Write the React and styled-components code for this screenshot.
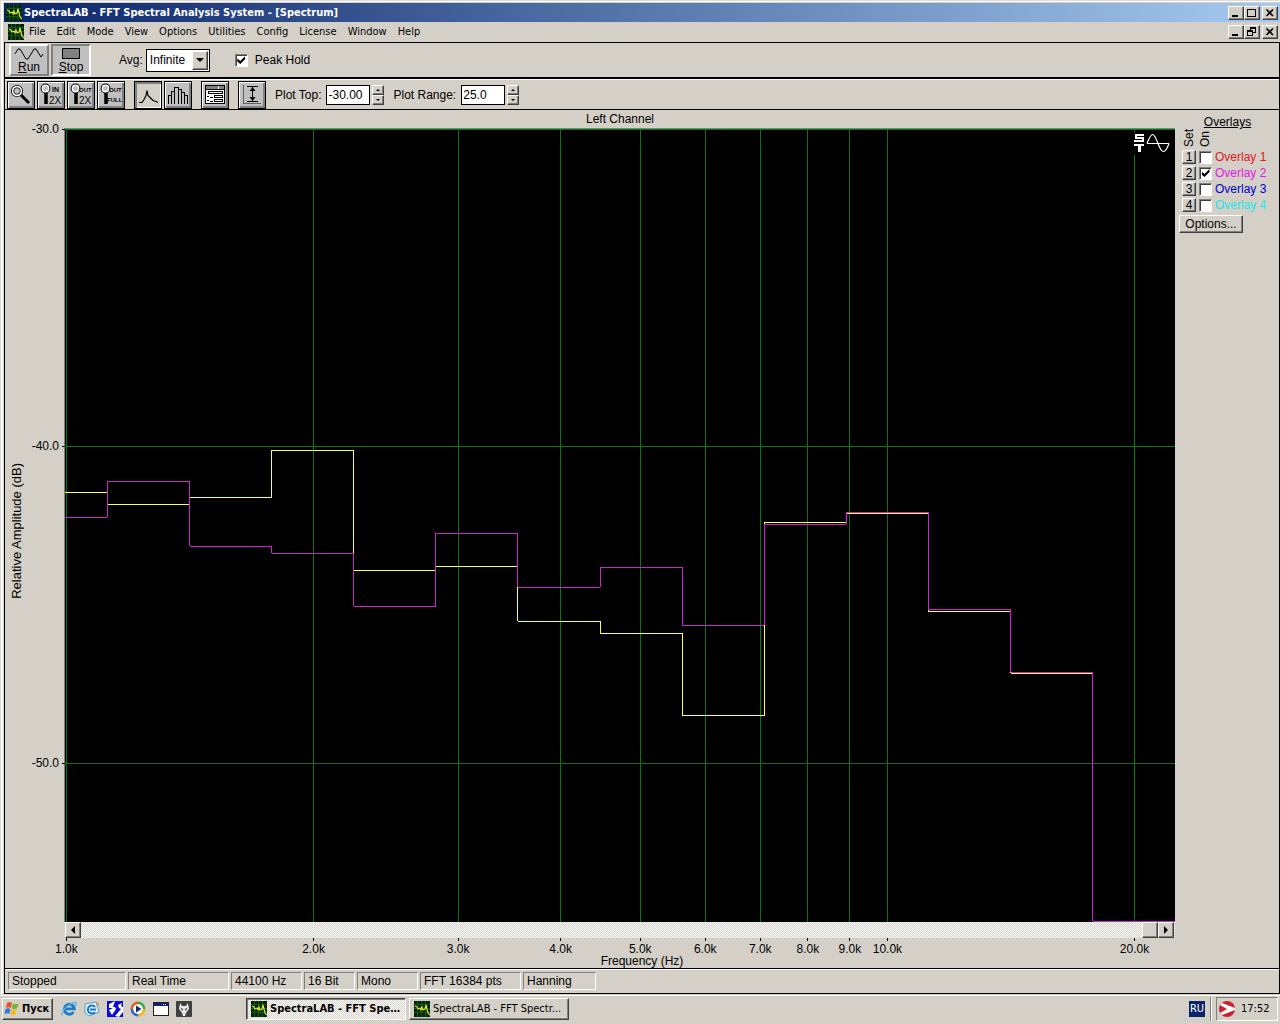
import React, { useState } from "react";
import styled, { createGlobalStyle, css } from "styled-components";

const FACE = "#d4d0c8";
const UI = '"DejaVu Sans Condensed", "DejaVu Sans", sans-serif';
const SANS = '"Liberation Sans", Arial, sans-serif';

const GlobalStyle = createGlobalStyle`
  *, *::before, *::after { box-sizing: border-box; }
  body { margin: 0; background: ${FACE}; color: #000; font: 12px/14px ${SANS}; }
  button, input, select { font: inherit; color: inherit; margin: 0; padding: 0; border-radius: 0; }
  svg { display: block; flex: none; }
`;

const raised = css`
  border: 1px solid;
  border-color: #fff #404040 #404040 #fff;
  box-shadow: inset -1px -1px 0 #808080;
`;
const sunken = css`
  border: 1px solid;
  border-color: #808080 #fff #fff #808080;
`;
const dither = css`
  background: repeating-conic-gradient(#fff 0% 25%, ${FACE} 0% 50%) 0 0 / 2px 2px;
`;

const Desktop = styled.div`
  min-height: 100vh;
  display: flex;
  flex-direction: column;
  background: ${FACE};
`;
const AppWindow = styled.div`
  flex: 1;
  display: flex;
  flex-direction: column;
  padding: 2px 0 0 3px;
  border-top: 1px solid #dedbd5;
  border-left: 1px solid #dedbd5;
  box-shadow: inset 2px 1px 0 #fff;
`;
const TitleBar = styled.header`
  height: 19px;
  display: flex;
  align-items: center;
  gap: 2px;
  padding: 1px 2px 0 2px;
  background: linear-gradient(90deg, #0a246a, #a6caf0);
`;
const Title = styled.h1`
  flex: 1;
  margin: 0;
  color: #fff;
  font: bold 11px/16px ${UI};
  white-space: nowrap;
`;
const MenuBar = styled.nav`
  height: 20px;
  display: flex;
  align-items: center;
  padding: 0 2px 0 4px;
`;
const MenuItems = styled.div`
  flex: 1;
  display: flex;
  padding-left: 5px;
  gap: 11px;
`;
const MenuItem = styled.button`
  border: 0;
  background: none;
  font: 11px/16px ${UI};
`;
const Controls = styled.div`
  display: flex;
`;
const CaptionButton = styled.button`
  width: 16px;
  height: 14px;
  margin-left: ${(p) => (p.$apart ? "2px" : "0")};
  display: grid;
  place-items: center;
  background: ${FACE};
  ${raised}
`;
const Frame = styled.main`
  flex: 1;
  display: flex;
  flex-direction: column;
  border: 1px solid #000;
`;
const RunBar = styled.section`
  height: 36px;
  display: flex;
  align-items: center;
  padding: 0 4px;
  border-bottom: 2px solid #000;
`;
const RunButton = styled.button`
  width: 40px;
  height: 32px;
  margin-right: 2px;
  display: flex;
  flex-direction: column;
  align-items: center;
  justify-content: flex-end;
  line-height: 13px;
  background: #c0c0c0;
  border: 2px solid;
  border-color: ${(p) => (p.$pressed ? "#808080 #fff #fff #808080" : "#fff #808080 #808080 #fff")};
`;
const AvgField = styled.div`
  display: flex;
  align-items: center;
  gap: 3px;
  margin-left: 26px;
`;
const SelectBox = styled.div`
  position: relative;
`;
const Select = styled.select`
  display: block;
  width: 64px;
  height: 23px;
  padding-left: 3px;
  appearance: none;
  background: #fff;
  border: 1px solid #000;
`;
const SelectArrow = styled.span`
  position: absolute;
  top: 2px;
  right: 2px;
  width: 16px;
  height: 19px;
  display: grid;
  place-items: center;
  pointer-events: none;
  background: ${FACE};
  ${raised}
`;
const PeakField = styled.label`
  display: flex;
  align-items: center;
  gap: 7px;
  margin-left: 25px;
`;
const Check = styled.input.attrs({ type: "checkbox" })`
  appearance: none;
  flex: none;
  width: 13px;
  height: 13px;
  display: grid;
  place-items: center;
  background: #fff;
  border: 1px solid;
  border-color: #808080 #fff #fff #808080;
  box-shadow: inset 1px 1px 0 #404040;
  &:checked::after {
    content: "";
    width: 8px;
    height: 8px;
    background: #000;
    clip-path: polygon(0 30%, 37% 62%, 100% 0, 100% 38%, 37% 100%, 0 68%);
  }
`;
const ToolBar = styled.section`
  height: 31px;
  display: flex;
  align-items: center;
  padding: 0 2px;
  border-top: 1px solid #fff;
  border-bottom: 1px solid #000;
`;
const ToolGroup = styled.div`
  display: flex;
  gap: 2px;
  margin-right: 9px;
`;
const ToolButton = styled.button`
  width: 28px;
  height: 28px;
  display: grid;
  place-items: center;
  border: 1px solid #000;
  background: ${(p) => (p.$pressed ? FACE : "#c0c0c0")};
  box-shadow: ${(p) =>
    p.$pressed
      ? "inset 2px 2px 0 #808080, inset -1px -1px 0 #fff"
      : "inset 1px 1px 0 #fff, inset -2px -2px 0 #808080"};
`;
const NumberField = styled.div`
  display: flex;
  align-items: center;
  gap: 2px;
  margin-right: 9px;
`;
const NumberLabel = styled.label`
  padding-right: 3px;
`;
const NumberInput = styled.input`
  width: 44px;
  height: 20px;
  padding-left: 1px;
  background: #fff;
  border: 1px solid #000;
`;
const Spinner = styled.div`
  display: flex;
  flex-direction: column;
`;
const SpinButton = styled.button`
  width: 12px;
  height: 10px;
  display: grid;
  place-items: center;
  background: ${FACE};
  ${raised}
`;
const Workspace = styled.section`
  flex: 1;
  display: flex;
`;
const Chart = styled.div`
  flex: 1;
  display: grid;
  grid-template-columns: 24px 36px minmax(0, 1fr);
  grid-template-rows: 18px minmax(240px, 1fr) 16px 30px;
`;
const ChartTitle = styled.h2`
  grid-column: 3;
  margin: 0;
  font: 12px/18px ${SANS};
  text-align: center;
`;
const YTitle = styled.div`
  grid-area: 2 / 1;
  place-self: center;
  margin-top: 12px;
  writing-mode: vertical-rl;
  transform: rotate(180deg);
  font-size: 13px;
  white-space: nowrap;
`;
const AxisSvg = styled.svg`
  width: 100%;
  height: 100%;
  overflow: visible;
  font: 12px ${SANS};
`;
const YAxisArea = styled.div`
  grid-area: 2 / 2;
  min-height: 0;
  padding-top: 1px;
  border-right: 1px solid #808080;
`;
const PlotArea = styled.div`
  grid-area: 2 / 3;
  position: relative;
  min-height: 0;
  background: #000;
  border-top: 1px solid #6b946b;
`;
const PlotBadge = styled.div`
  position: absolute;
  top: 4px;
  right: 4px;
  background: #000;
`;
const ScrollBar = styled.div`
  grid-area: 3 / 3;
  display: flex;
  padding: 0 1px 0 0;
  ${dither}
`;
const ScrollGap = styled.div`
  flex: 1;
`;
const ScrollButton = styled.button`
  width: 16px;
  height: 16px;
  display: grid;
  place-items: center;
  background: ${FACE};
  ${raised}
`;
const XAxisArea = styled.div`
  grid-area: 4 / 3;
  display: grid;
  grid-template-rows: 16px 14px;
`;
const XTitle = styled.div`
  padding-left: 44px;
  text-align: center;
`;
const OverlayPanel = styled.aside`
  width: 104px;
  padding: 5px 3px 0 4px;
`;
const OverlayHeading = styled.h2`
  margin: 0;
  font: 12px/14px ${SANS};
  text-align: center;
  text-decoration: underline;
`;
const OverlayHeads = styled.div`
  display: flex;
  padding-left: 3px;
  gap: 2px;
  height: 20px;
  align-items: flex-end;
`;
const SideHead = styled.span`
  writing-mode: vertical-rl;
  transform: rotate(180deg);
  padding-top: 2px;
  line-height: 14px;
`;
const OverlayRow = styled.div`
  height: 16px;
  display: flex;
  align-items: center;
  padding-left: 3px;
  gap: 3px;
`;
const SetButton = styled.button`
  width: 14px;
  height: 14px;
  line-height: 12px;
  background: ${FACE};
  ${raised}
`;
const OverlayName = styled.label`
  color: ${(p) => p.$color};
`;
const OptionsButton = styled.button`
  width: 64px;
  height: 18px;
  margin-top: 2px;
  line-height: 14px;
  background: ${FACE};
  ${raised}
`;
const StatusBar = styled.footer`
  height: 25px;
  display: flex;
  align-items: center;
  gap: 2px;
  padding: 0 3px;
  border-top: 1px solid #000;
  box-shadow: inset 0 1px 0 #fff;
`;
const StatusCell = styled.div`
  width: ${(p) => p.$width}px;
  height: 18px;
  padding-left: 3px;
  line-height: 16px;
  white-space: nowrap;
  ${sunken}
`;
const TaskBar = styled.footer`
  height: 30px;
  display: flex;
  align-items: center;
  padding: 0 2px;
  box-shadow: inset 0 1px 0 ${FACE}, inset 0 2px 0 #fff;
  font: 11px/16px ${UI};
`;
const StartButton = styled.button`
  width: 51px;
  height: 22px;
  display: flex;
  align-items: center;
  padding-left: 1px;
  gap: 2px;
  font-weight: bold;
  background: ${FACE};
  ${raised}
`;
const QuickLaunch = styled.div`
  display: flex;
  gap: 7px;
  margin: 0 54px 0 8px;
`;
const QuickButton = styled.button`
  width: 16px;
  height: 16px;
  border: 0;
  background: none;
`;
const Tasks = styled.div`
  flex: 1;
  display: flex;
  gap: 3px;
`;
const TaskButton = styled.button`
  width: 160px;
  height: 22px;
  display: flex;
  align-items: center;
  gap: 3px;
  padding: 0 4px;
  background: ${FACE};
  ${raised}
  ${(p) =>
    p.$active &&
    css`
      ${dither}
      font-weight: bold;
      border-color: #404040 #fff #fff #404040;
      box-shadow: inset 1px 1px 0 #808080;
    `}
`;
const TaskText = styled.span`
  overflow: hidden;
  white-space: nowrap;
  text-overflow: ellipsis;
`;
const Language = styled.span`
  width: 16px;
  height: 16px;
  margin-right: 5px;
  color: #fff;
  background: #0a246a;
  text-align: center;
`;
const Divider = styled.span`
  width: 2px;
  height: 24px;
  margin-right: 4px;
  border-left: 1px solid #808080;
  border-right: 1px solid #fff;
`;
const Tray = styled.div`
  width: 62px;
  height: 24px;
  display: flex;
  align-items: center;
  gap: 6px;
  padding-left: 2px;
  ${sunken}
`;

/* ---------- chart ---------- */

const TOP_DB = -30;
const RANGE_DB = 25;
const MIN_LOG = 2.9983;
const SPAN_LOG = 1.352;
const xPos = (hz) => `${((Math.log10(hz) - MIN_LOG) / SPAN_LOG) * 100}%`;
const yPos = (db) => `${((TOP_DB - db) / RANGE_DB) * 100}%`;

const FREQUENCIES = [1, 2, 3, 4, 5, 6, 7, 8, 9, 10, 20];
const LEVELS = [-30, -40, -50];
const LIVE = [-41.45, -41.83, -41.61, -40.13, -43.91, -43.79, -45.52, -45.9, -48.49, -42.4, -42.11, -45.21, -47.16, -54.98];
const OVERLAY = [-42.24, -41.1, -43.15, -43.38, -45.05, -42.74, -44.45, -43.82, -45.65, -42.46, -42.09, -45.14, -47.13, -54.98];

const edge = (i) => {
  if (i === 0) return "0%";
  if (i === LIVE.length) return "100%";
  return xPos(10 ** (3.05 + (i - 1) * 0.1));
};

function Trace({ levels, color }) {
  return (
    <g stroke={color} shapeRendering="crispEdges">
      {levels.map((db, i) => (
        <g key={i}>
          <line x1={edge(i)} x2={edge(i + 1)} y1={yPos(db)} y2={yPos(db)} />
          {i > 0 && <line x1={edge(i)} x2={edge(i)} y1={yPos(levels[i - 1])} y2={yPos(db)} />}
        </g>
      ))}
    </g>
  );
}

function Plot() {
  return (
    <AxisSvg role="img" aria-label="Left channel spectrum">
      <g stroke="#0a7414" shapeRendering="crispEdges">
        {FREQUENCIES.map((k) => (
          <line key={k} x1={xPos(k * 1000)} x2={xPos(k * 1000)} y1="0" y2="100%" />
        ))}
        {LEVELS.map((db) => (
          <line key={db} x1="0" x2="100%" y1={yPos(db)} y2={yPos(db)} />
        ))}
      </g>
      <Trace levels={LIVE} color="#ffff50" />
      <Trace levels={OVERLAY} color="#cc24cc" />
    </AxisSvg>
  );
}

/* ---------- icons ---------- */

const AppIcon = () => (
  <svg width="16" height="16" viewBox="0 0 16 16" shapeRendering="crispEdges">
    <rect width="16" height="16" fill="#04240a" />
    <path d="M0 3.5h16M0 7.5h16M0 11.5h16M3.5 0v16M7.5 0v16M11.5 0v16" stroke="#0d5a1a" />
    <path
      d="M1 5l2 1 1 2 2-1 1 2 1-3 1 3 2-1 1-4 1 4 1 4 2 2"
      fill="none"
      stroke="#e0e820"
      strokeWidth="1.2"
      shapeRendering="auto"
    />
  </svg>
);

const WindowGlyph = ({ kind }) => (
  <svg width="10" height="10" viewBox="0 0 10 10" fill="none" stroke="#000" shapeRendering="crispEdges">
    {kind === "min" && <path d="M1 8h6" strokeWidth="2" />}
    {kind === "max" && <path d="M.5 1.5h8v7h-8zM0 1h9" />}
    {kind === "restore" && <path d="M3.5 3V.5h5v5H6M3 1.5h6M.5 4.5h5v4h-5zM0 3.5h6" />}
    {kind === "close" && <path d="M1.5 1.5l6.500 6.500M8 1.5L1.500 8" strokeWidth="1.600" shapeRendering="auto" />}
  </svg>
);

const Arrow = ({ dir, size = 4 }) => {
  const d = {
    down: "M0 2h8L4 6z",
    up: "M0 6h8L4 2z",
    left: "M6 0v8L2 4z",
    right: "M2 0v8l4-4z",
  }[dir];
  return (
    <svg width={size} height={size} viewBox="0 0 8 8">
      <path d={d} />
    </svg>
  );
};

const Loupe = () => (
  <g>
    <path d="M8 11v11" stroke="#000" strokeWidth="3.500" />
    <circle cx="7.500" cy="6.500" r="4.200" fill="#c0c0c0" stroke="#000" strokeWidth="1.400" />
    <circle cx="7.500" cy="6.500" r="3.200" fill="none" stroke="#fff" strokeWidth="1.400" />
  </g>
);

const ToolIcon = ({ kind }) => (
  <svg width="26" height="26" viewBox="0 0 26 26" fill="none" stroke="#000">
    {kind === "zoom" && (
      <>
        <path d="M13 13l8 8" strokeWidth="3" />
        <circle cx="9" cy="9" r="5.500" strokeWidth="1.200" />
        <circle cx="9" cy="9" r="4.300" stroke="#fff" strokeWidth="1.800" />
        <circle cx="9" cy="9" r="3.300" fill="#c0c0c0" strokeWidth=".8" />
      </>
    )}
    {["in", "out", "full"].includes(kind) && (
      <>
        <Loupe />
        <g fill="#000" stroke="none" fontFamily="Liberation Sans, sans-serif" fontWeight="bold">
          <text x={kind === "in" ? 14 : 11} y="10" fontSize={kind === "in" ? 7 : 6}>{kind === "in" ? "IN" : "OUT"}</text>
          {kind === "full" ? (
            <text x="9" y="20" fontSize="6">FULL</text>
          ) : (
            <text x="11" y="22" fontSize="10" fontWeight="normal">2X</text>
          )}
        </g>
      </>
    )}
    {kind === "line" && <path d="M4 20.500h3l2-3 2-4 1-5 1 5 3 3 2 2 3 1 2 1" strokeWidth="1.200" />}
    {kind === "bars" && (
      <path shapeRendering="crispEdges" d="M3.500 22v-8.500h3V22M6.500 13.500v-4h3V22M9.500 9.500v-4h4V22M13.500 7.500h3V22M16.500 10.500h3V22M19.500 13.500h3V22" />
    )}
    {kind === "panel" && (
      <g shapeRendering="crispEdges">
        <rect x="3.500" y="3.500" width="19" height="18" fill="#fff" />
        <path d="M4 5.500h18" stroke="#808080" strokeWidth="3" strokeDasharray="12 1" />
        <path d="M4 7.500h18" />
        <path d="M5 14.500h2M8 15.500h3M5 18.500h2M8 19.500h3" />
        <path d="M6.500 9.500h14v2h-14zM12.500 13.500h8v2h-8zM12.500 17.500h8v2h-8z" />
      </g>
    )}
    {kind === "range" && (
      <g>
        <path d="M4.500 3v18.500H22" stroke="#606060" shapeRendering="crispEdges" />
        <path d="M8 4.500h11M8 19.500h11M13.500 5v14" shapeRendering="crispEdges" />
        <path d="M13.500 5l3 4h-6zM13.500 19l3-4h-6z" fill="#000" stroke="none" />
      </g>
    )}
  </svg>
);

const SignalBadge = () => (
  <svg width="38" height="22" viewBox="0 0 38 22" fill="none" stroke="#fff">
    <g shapeRendering="crispEdges" strokeWidth="2">
      <path d="M11 2H2M3 1v4M2 5h9M10 5v4M11 8H1" />
      <path d="M1 12h10" />
      <path d="M6.500 12v7" strokeWidth="3" />
    </g>
    <path d="M14 10.500h22M14 10.500c2-5 3.500-9 5.500-9s4 5 5.500 9 3 8 5.500 8 4-4 5.500-8" strokeWidth="1.200" />
  </svg>
);

const StartLogo = () => (
  <svg width="16" height="16" viewBox="0 0 16 16">
    <path d="M3 2c2-1.500 3-1 5 0L6.800 7c-2-1-3-1-5 0z" fill="#e5532a" />
    <path d="M9 2.400c2 1 3 1 5.500 0L13 7.400c-2 1-3 1-5.200 0z" fill="#72b62b" />
    <path d="M1.500 8c2-1 3-1 5 0L5.300 13c-2-1-3-1-5 0z" fill="#3477dd" />
    <path d="M7.500 8.400c2 1 3 1 5.300 0L11.400 13.400c-2 1-3 1-5.200 0z" fill="#f5b920" />
  </svg>
);

const QuickIcon = ({ kind }) => (
  <svg width="16" height="16" viewBox="0 0 16 16" fill="none">
    {kind === "Internet Explorer" && (
      <>
        <path d="M12.500 11a5 5 0 1 1 .8-3.200H4" stroke="#1c7cc8" strokeWidth="2.800" />
        <path d="M1 14C0 10 9 1 15 1.500c1 1 0 3-1 4" stroke="#55b4ec" strokeWidth="1.300" />
      </>
    )}
    {kind === "Outlook Express" && (
      <>
        <path d="M1 3l11-2 3 10-10 4-4-3z" fill="#e6f3fc" stroke="#4a9fd8" />
        <path d="M11 6a4 4 0 1 0 0 5M6 8.500h6" stroke="#1878c4" strokeWidth="2" />
        <path d="M12 1l3 2-1 2" stroke="#e48a30" />
      </>
    )}
    {kind === "Winamp" && (
      <>
        <rect width="16" height="16" fill="#0808d8" />
        <path d="M8 0L2 3v4h4l-4 2 3 5 4-6-1-2H6zM15 2l-4 2 1 3 2 1-6 7 4 1 4-5V6l-2-1z" fill="#fff" />
      </>
    )}
    {kind === "Media Player" && (
      <>
        <path d="M2 8a6 6 0 0 1 6-6" stroke="#e45a20" strokeWidth="3" />
        <path d="M8 2a6 6 0 0 1 6 6" stroke="#3ca848" strokeWidth="3" />
        <path d="M14 8a6 6 0 0 1-6 6" stroke="#f0b418" strokeWidth="3" />
        <path d="M8 14a6 6 0 0 1-6-6" stroke="#2c68d0" strokeWidth="3" />
        <circle cx="8" cy="8" r="4.800" fill="#fff" />
        <path d="M6 4.500v7L11.500 8z" fill="#182868" />
      </>
    )}
    {kind === "Console" && (
      <>
        <rect x=".5" y="1.500" width="15" height="13" fill="#fff" stroke="#202020" />
        <path d="M1 3.500h14" stroke="#102078" strokeWidth="3" />
        <path d="M10 3.500h4" stroke="#fff" strokeDasharray="1 1" />
      </>
    )}
    {kind === "Foobar" && (
      <>
        <rect width="16" height="16" rx="1" fill="#404040" />
        <path d="M4 2l2 3h4l2-3 1 6-3 4-1 3H7l-1-3-3-4z" fill="#e8e8e8" />
        <path d="M5 7l2 1-1 2zM11 7L9 8l1 2z" fill="#202020" />
      </>
    )}
  </svg>
);

const TrayIcon = () => (
  <svg width="16" height="16" viewBox="0 0 16 16">
    <circle cx="8" cy="8" r="8" fill="#cc2030" />
    <path d="M3 2l13 5v2L3 14l-2-2 7-4-7-4z" fill="#fff" />
  </svg>
);

/* ---------- parts ---------- */

const WindowButtons = ({ middle, target }) => (
  <Controls>
    <CaptionButton aria-label={`Minimize ${target}`}><WindowGlyph kind="min" /></CaptionButton>
    <CaptionButton aria-label={`Resize ${target}`}><WindowGlyph kind={middle} /></CaptionButton>
    <CaptionButton $apart aria-label={`Close ${target}`}><WindowGlyph kind="close" /></CaptionButton>
  </Controls>
);

function PlotNumber({ id, label, initial, digits }) {
  const [value, setValue] = useState(initial);
  const step = (n) => setValue((Number(value) + n).toFixed(digits));
  return (
    <NumberField>
      <NumberLabel htmlFor={id}>{label}</NumberLabel>
      <NumberInput id={id} value={value} onChange={(e) => setValue(e.target.value)} />
      <Spinner>
        <SpinButton aria-label={`Increase ${label}`} onClick={() => step(1)}><Arrow dir="up" /></SpinButton>
        <SpinButton aria-label={`Decrease ${label}`} onClick={() => step(-1)}><Arrow dir="down" /></SpinButton>
      </Spinner>
    </NumberField>
  );
}

const TOOL_GROUPS = [
  [["zoom", "Zoom"], ["in", "Zoom in 2X"], ["out", "Zoom out 2X"], ["full", "Zoom out full"]],
  [["line", "Line plot"], ["bars", "Bar plot"]],
  [["panel", "Plot options"]],
  [["range", "Auto range"]],
];
const MENUS = ["File", "Edit", "Mode", "View", "Options", "Utilities", "Config", "License", "Window", "Help"];
const OVERLAYS = ["#e01818", "#e018e0", "#0000d0", "#20e8e8"];
const STATUS = [["Stopped", 118], ["Real Time", 101], ["44100 Hz", 71], ["16 Bit", 51], ["Mono", 61], ["FFT 16384 pts", 101], ["Hanning", 73]];
const QUICK = ["Internet Explorer", "Outlook Express", "Winamp", "Media Player", "Console", "Foobar"];

export default function App() {
  return (
    <Desktop>
      <GlobalStyle />
      <AppWindow>
        <TitleBar>
          <AppIcon />
          <Title>SpectraLAB - FFT Spectral Analysis System - [Spectrum]</Title>
          <WindowButtons middle="max" target="application" />
        </TitleBar>
        <MenuBar>
          <AppIcon />
          <MenuItems>
            {MENUS.map((m) => <MenuItem key={m}>{m}</MenuItem>)}
          </MenuItems>
          <WindowButtons middle="restore" target="document" />
        </MenuBar>
        <Frame>
          <RunBar>
            <RunButton>
              <svg width="30" height="14" viewBox="0 0 30 14" fill="none" stroke="#000">
                <path d="M1 7l3-5h2l6 10h2l6-10h2l5 8 2-3" />
              </svg>
              <span><u>R</u>un</span>
            </RunButton>
            <RunButton $pressed>
              <svg width="20" height="14" viewBox="0 0 20 14" shapeRendering="crispEdges">
                <rect x="1.500" y="1.500" width="17" height="10" fill="#808080" stroke="#000" />
              </svg>
              <span><u>S</u>top</span>
            </RunButton>
            <AvgField>
              <label htmlFor="avg">Avg:</label>
              <SelectBox>
                <Select id="avg" defaultValue="Infinite"><option>Infinite</option></Select>
                <SelectArrow><Arrow dir="down" size={8} /></SelectArrow>
              </SelectBox>
            </AvgField>
            <PeakField><Check defaultChecked />Peak Hold</PeakField>
          </RunBar>
          <ToolBar>
            {TOOL_GROUPS.map((group, i) => (
              <ToolGroup key={i}>
                {group.map(([kind, name]) => (
                  <ToolButton key={kind} aria-label={name} $pressed={kind === "line"}>
                    <ToolIcon kind={kind} />
                  </ToolButton>
                ))}
              </ToolGroup>
            ))}
            <PlotNumber id="plot-top" label="Plot Top:" initial="-30.00" digits={2} />
            <PlotNumber id="plot-range" label="Plot Range:" initial="25.0" digits={1} />
          </ToolBar>
          <Workspace>
            <Chart>
              <ChartTitle>Left Channel</ChartTitle>
              <YTitle>Relative Amplitude (dB)</YTitle>
              <YAxisArea>
                <AxisSvg>
                  {LEVELS.map((db) => (
                    <g key={db}>
                      <text x="30" y={yPos(db)} dy="4" textAnchor="end">{db.toFixed(1)}</text>
                      <line x1="33" x2="36" y1={yPos(db)} y2={yPos(db)} stroke="#000" shapeRendering="crispEdges" />
                    </g>
                  ))}
                </AxisSvg>
              </YAxisArea>
              <PlotArea>
                <Plot />
                <PlotBadge><SignalBadge /></PlotBadge>
              </PlotArea>
              <ScrollBar>
                <ScrollButton aria-label="Scroll left"><Arrow dir="left" size={8} /></ScrollButton>
                <ScrollGap />
                <ScrollButton aria-label="Scroll position" />
                <ScrollButton aria-label="Scroll right"><Arrow dir="right" size={8} /></ScrollButton>
              </ScrollBar>
              <XAxisArea>
                <AxisSvg>
                  {FREQUENCIES.map((k) => (
                    <g key={k}>
                      <line x1={xPos(k * 1000)} x2={xPos(k * 1000)} y1="0" y2="3" stroke="#000" shapeRendering="crispEdges" />
                      <text x={xPos(k * 1000)} y="15" textAnchor="middle">{k.toFixed(1)}k</text>
                    </g>
                  ))}
                </AxisSvg>
                <XTitle>Frequency (Hz)</XTitle>
              </XAxisArea>
            </Chart>
            <OverlayPanel>
              <OverlayHeading>Overlays</OverlayHeading>
              <OverlayHeads>
                <SideHead>Set</SideHead>
                <SideHead>On</SideHead>
              </OverlayHeads>
              {OVERLAYS.map((color, i) => (
                <OverlayRow key={color}>
                  <SetButton aria-label={`Set overlay ${i + 1}`}>{i + 1}</SetButton>
                  <Check id={`overlay-${i}`} defaultChecked={i === 1} />
                  <OverlayName htmlFor={`overlay-${i}`} $color={color}>Overlay {i + 1}</OverlayName>
                </OverlayRow>
              ))}
              <OptionsButton>Options...</OptionsButton>
            </OverlayPanel>
          </Workspace>
          <StatusBar>
            {STATUS.map(([text, width]) => <StatusCell key={text} $width={width}>{text}</StatusCell>)}
          </StatusBar>
        </Frame>
      </AppWindow>
      <TaskBar>
        <StartButton><StartLogo />Пуск</StartButton>
        <QuickLaunch>
          {QUICK.map((kind) => (
            <QuickButton key={kind} aria-label={kind}><QuickIcon kind={kind} /></QuickButton>
          ))}
        </QuickLaunch>
        <Tasks>
          <TaskButton $active><AppIcon /><TaskText>SpectraLAB - FFT Spe...</TaskText></TaskButton>
          <TaskButton><AppIcon /><TaskText>SpectraLAB - FFT Spectr...</TaskText></TaskButton>
        </Tasks>
        <Language>RU</Language>
        <Divider />
        <Tray><TrayIcon /><span>17:52</span></Tray>
      </TaskBar>
    </Desktop>
  );
}
